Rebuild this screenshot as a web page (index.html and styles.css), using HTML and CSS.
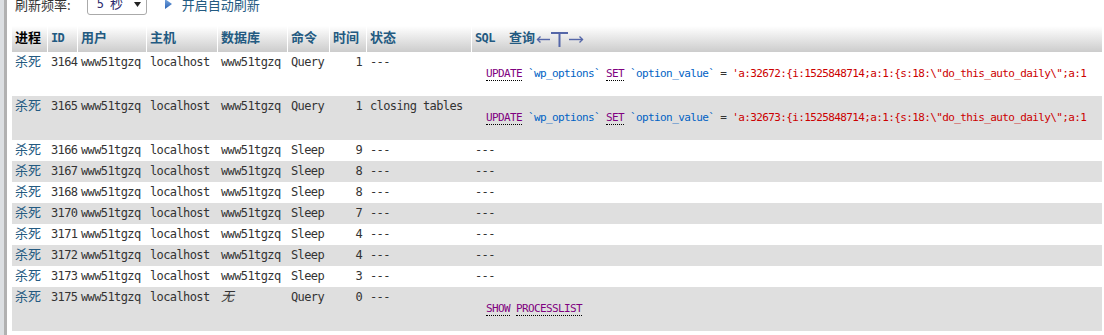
FILE: index.html
```html
<!DOCTYPE html>
<html lang="zh-CN">
<head>
    <meta charset="UTF-8">
    <meta name="viewport" content="width=device-width, initial-scale=1.0">
    <title>进程列表</title>
    <link rel="stylesheet" href="styles.css">
</head>
<body>
<div class="page">
    <div class="gutter"></div>
    <div class="main">
        <div class="toolbar">
            <span class="zh label">刷新频率:</span>
            <div class="select">
                <span>5 <span class="zh">秒</span></span>
                <svg class="caret" width="7" height="5" viewBox="0 0 7 5"><polygon points="0,0 7,0 3.5,5" fill="#222"/></svg>
            </div>
            <a class="play" href="#">
                <svg width="7" height="10" viewBox="0 0 7 10">
                    <defs><linearGradient id="pg" x1="0" y1="0" x2="0" y2="1"><stop offset="0" stop-color="#7aa8e0"/><stop offset="1" stop-color="#2a62b4"/></linearGradient></defs>
                    <polygon points="0,0 7,5 0,10" fill="url(#pg)"/>
                </svg>
                <span class="zh">开启自动刷新</span>
            </a>
        </div>

        <table class="proc">
            <colgroup>
                <col style="width:36px"><col style="width:30px"><col style="width:69px">
                <col style="width:71px"><col style="width:70px"><col style="width:42px">
                <col style="width:37px"><col style="width:105px"><col style="width:630px">
            </colgroup>
            <thead>
                <tr>
                    <th class="plain"><span class="zh">进程</span></th>
                    <th><a href="#">ID</a></th>
                    <th><a href="#" class="zh">用户</a></th>
                    <th><a href="#" class="zh">主机</a></th>
                    <th><a href="#" class="zh">数据库</a></th>
                    <th><a href="#" class="zh">命令</a></th>
                    <th><a href="#" class="zh">时间</a></th>
                    <th><a href="#" class="zh">状态</a></th>
                    <th>
                        <a href="#">SQL<span class="zh query">查询</span></a><svg class="full" width="48" height="16" viewBox="0 0 48 16">
                            <g stroke="#5567a8" stroke-width="1.4" fill="none">
                                <line x1="1.5" y1="8.5" x2="14" y2="8.5"/>
                                <polyline points="4.5,5.5 1.5,8.5 4.5,11.5"/>
                                <line x1="33" y1="8.5" x2="46.5" y2="8.5"/>
                                <polyline points="43.5,5.5 46.5,8.5 43.5,11.5"/>
                            </g>
                            <rect x="15" y="1" width="17" height="2" fill="#5567a8"/>
                            <rect x="22.5" y="1" width="2" height="15" fill="#5567a8"/>
                        </svg>
                    </th>
                </tr>
            </thead>
            <tbody>
                <tr>
                    <td><a href="#" class="zh">杀死</a></td><td>3164</td><td>www51tgzq</td><td>localhost</td><td>www51tgzq</td><td>Query</td><td class="num">1</td><td>---</td>
                    <td><div class="sql"><a class="kw" href="#">UPDATE</a> <span class="bt">`wp_options`</span> <a class="kw" href="#">SET</a> <span class="bt">`option_value`</span> <span class="op">=</span> <span class="str">'a:32672:{i:1525848714;a:1:{s:18:\"do_this_auto_daily\";a:1</span></div></td>
                </tr>
                <tr>
                    <td><a href="#" class="zh">杀死</a></td><td>3165</td><td>www51tgzq</td><td>localhost</td><td>www51tgzq</td><td>Query</td><td class="num">1</td><td>closing tables</td>
                    <td><div class="sql"><a class="kw" href="#">UPDATE</a> <span class="bt">`wp_options`</span> <a class="kw" href="#">SET</a> <span class="bt">`option_value`</span> <span class="op">=</span> <span class="str">'a:32673:{i:1525848714;a:1:{s:18:\"do_this_auto_daily\";a:1</span></div></td>
                </tr>
                <tr>
                    <td><a href="#" class="zh">杀死</a></td><td>3166</td><td>www51tgzq</td><td>localhost</td><td>www51tgzq</td><td>Sleep</td><td class="num">9</td><td>---</td><td>---</td>
                </tr>
                <tr>
                    <td><a href="#" class="zh">杀死</a></td><td>3167</td><td>www51tgzq</td><td>localhost</td><td>www51tgzq</td><td>Sleep</td><td class="num">8</td><td>---</td><td>---</td>
                </tr>
                <tr>
                    <td><a href="#" class="zh">杀死</a></td><td>3168</td><td>www51tgzq</td><td>localhost</td><td>www51tgzq</td><td>Sleep</td><td class="num">8</td><td>---</td><td>---</td>
                </tr>
                <tr>
                    <td><a href="#" class="zh">杀死</a></td><td>3170</td><td>www51tgzq</td><td>localhost</td><td>www51tgzq</td><td>Sleep</td><td class="num">7</td><td>---</td><td>---</td>
                </tr>
                <tr>
                    <td><a href="#" class="zh">杀死</a></td><td>3171</td><td>www51tgzq</td><td>localhost</td><td>www51tgzq</td><td>Sleep</td><td class="num">4</td><td>---</td><td>---</td>
                </tr>
                <tr>
                    <td><a href="#" class="zh">杀死</a></td><td>3172</td><td>www51tgzq</td><td>localhost</td><td>www51tgzq</td><td>Sleep</td><td class="num">4</td><td>---</td><td>---</td>
                </tr>
                <tr>
                    <td><a href="#" class="zh">杀死</a></td><td>3173</td><td>www51tgzq</td><td>localhost</td><td>www51tgzq</td><td>Sleep</td><td class="num">3</td><td>---</td><td>---</td>
                </tr>
                <tr>
                    <td><a href="#" class="zh">杀死</a></td><td>3175</td><td>www51tgzq</td><td>localhost</td><td><i class="zh">无</i></td><td>Query</td><td class="num">0</td><td>---</td>
                    <td><div class="sql"><a class="kw" href="#">SHOW</a> <a class="kw" href="#">PROCESSLIST</a></div></td>
                </tr>
            </tbody>
        </table>
    </div>
</div>
</body>
</html>
```

FILE: styles.css
```css
body {
    margin: 0;
    font-family: "DejaVu Sans Mono", "Liberation Mono", monospace;
    font-size: 12px;
    letter-spacing: -0.6px;
    color: #333;
    background: #fff;
}
a {
    color: #235a81;
    text-decoration: none;
}
.zh {
    font-family: "Noto Sans CJK SC", sans-serif;
    font-size: 13px;
    line-height: 11px;
    letter-spacing: 0;
}
.page {
    display: flex;
    min-height: 335px;
}
.gutter {
    flex: none;
    width: 4px;
    background: #dcdfe2;
    border-right: 3px solid #b1b1b1;
}
.main {
    flex: 1;
    padding-left: 5px;
}

/* refresh bar */
.toolbar {
    display: flex;
    align-items: center;
    height: 22px;
    margin: -7px 0 11px 3px;
}
.select {
    display: flex;
    align-items: center;
    justify-content: space-between;
    box-sizing: border-box;
    width: 60px;
    height: 22px;
    margin-left: 16px;
    padding: 0 5px 0 9px;
    border: 1px solid #aaa;
    border-radius: 3px;
    color: #2c2c6e;
}
.play {
    display: flex;
    align-items: center;
    margin-left: 18px;
}
.play svg {
    margin-right: 10px;
}

/* process table */
.proc {
    width: 1090px;
    table-layout: fixed;
    border-collapse: separate;
    border-spacing: 0;
}
.proc th {
    padding: 4px 2px 6px 3px;
    line-height: 16px;
    text-align: left;
    font-weight: bold;
    color: #235a81;
    background: linear-gradient(#fff, #ccc);
    border-right: 1px solid #fff;
    white-space: nowrap;
}
.proc th:last-child {
    border-right: none;
}
.proc th.plain {
    color: #000;
}
.proc th .query {
    margin-left: 14px;
}
.proc th .full {
    display: inline-block;
    vertical-align: top;
    margin: 1px 0 -1px 1px;
}
.proc td {
    padding: 3px 2px 3px 3px;
    line-height: 15px;
    vertical-align: top;
    white-space: nowrap;
    overflow: hidden;
}
.proc tbody tr:nth-child(even) td {
    background: #dfdfdf;
}
.proc td.num {
    text-align: right;
    padding-right: 5px;
}
.sql {
    margin: 11px 0 12px 11px;
    font-size: 11px;
    letter-spacing: -0.62px;
}
.kw {
    color: #800080;
    border-bottom: 1px dotted #000;
}
.bt {
    color: #0062c4;
}
.op {
    color: #333;
}
.str {
    color: #c00;
}
```
